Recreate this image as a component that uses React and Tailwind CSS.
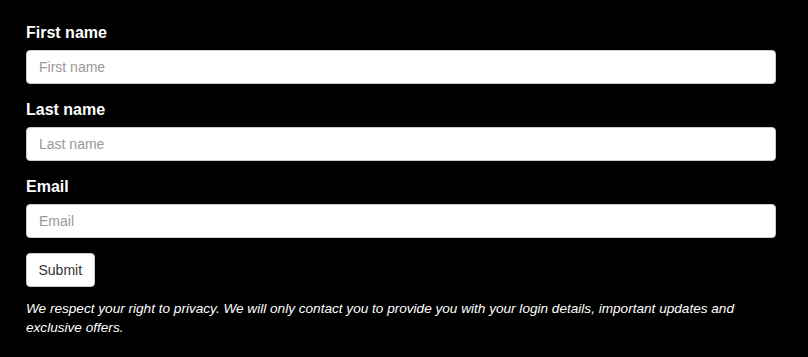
import React from "react";

const fields = [
  { id: "first", label: "First name", type: "text" },
  { id: "last", label: "Last name", type: "text" },
  { id: "email", label: "Email", type: "email" },
];

const App = () => {
  return (
    <div
      className="min-h-[357px] bg-black pt-[20px] pl-[26px] pr-[32px]"
      style={{ fontFamily: '"Liberation Sans", Arial, sans-serif' }}
    >
      <form onSubmit={(e) => e.preventDefault()}>
        {fields.map((f) => (
          <div key={f.id} className="mb-[13px]">
            <label
              htmlFor={f.id}
              className="block text-[16px] leading-[26px] font-bold text-white mb-[4px]"
            >
              {f.label}
            </label>
            <input
              id={f.id}
              type={f.type}
              placeholder={f.label}
              className="block w-full h-[34px] rounded-[4px] border border-[#ccc] bg-white px-[12px] text-[14px] text-[#555] placeholder-[#999] outline-none"
            />
          </div>
        ))}
        <button
          type="submit"
          className="mt-[2px] h-[34px] rounded-[4px] border border-[#ccc] bg-white px-[11.5px] text-[14px] text-[#333]"
        >
          Submit
        </button>
        <p className="mt-[12px] text-[13.6px] leading-[19px] italic text-white">
          We respect your right to privacy. We will only contact you to provide
          you with your login details, important updates and exclusive offers.
        </p>
      </form>
    </div>
  );
};

export default App;
